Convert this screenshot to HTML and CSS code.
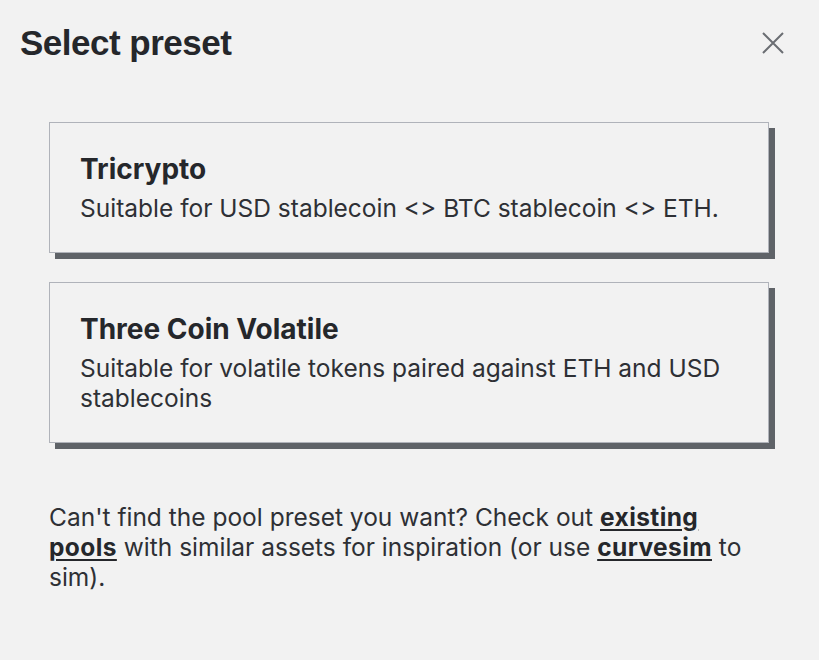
FILE: index.html
```html
<!DOCTYPE html>
<html lang="en">
<head>
<meta charset="utf-8">
<link rel="stylesheet" href="styles.css">
</head>
<body>
<div class="modal">
  <header class="modal-header">
    <h1 class="modal-title">Select preset</h1>
    <button class="close-btn" aria-label="Close">
      <svg width="24" height="24" viewBox="0 0 24 24"><path d="M2 2L22 22M22 2L2 22" stroke="#6b6e73" stroke-width="2" fill="none"/></svg>
    </button>
  </header>
  <div class="modal-body">
    <div class="preset-list">
      <div class="preset-card">
        <h2 class="preset-title">Tricrypto</h2>
        <p class="preset-desc">Suitable for USD stablecoin &lt;&gt; BTC stablecoin &lt;&gt; ETH.</p>
      </div>
      <div class="preset-card">
        <h2 class="preset-title">Three Coin Volatile</h2>
        <p class="preset-desc">Suitable for volatile tokens paired against ETH and USD stablecoins</p>
      </div>
    </div>
    <p class="footer-note">Can't find the pool preset you want? Check out <a href="#">existing pools</a> with similar assets for inspiration (or use <a href="#">curvesim</a> to sim).</p>
  </div>
</div>
</body>
</html>
```
FILE: styles.css
```css
* { box-sizing: border-box; }
html, body { margin: 0; padding: 0; }
body {
  background: #f2f2f2;
  color: #25272b;
  font-family: Inter, "Noto Sans", sans-serif;
  width: 819px;
  height: 660px;
  overflow: hidden;
}
.modal-header {
  display: flex;
  align-items: flex-start;
  justify-content: space-between;
  padding: 22px 34px 0 20px;
  height: 88px;
}
.modal-title {
  margin: 0;
  font-family: "Liberation Sans", Arial, sans-serif;
  font-weight: 700;
  font-size: 35px;
  line-height: 42px;
  letter-spacing: -0.5px;
  color: #25272b;
}
.close-btn {
  background: none;
  border: 0;
  padding: 0;
  margin-top: 9px;
  width: 24px;
  height: 24px;
  cursor: pointer;
}
.close-btn svg { display: block; }
.modal-body {
  padding: 34px 50px 0 49px;
}
.preset-list {
  display: flex;
  flex-direction: column;
  gap: 29px;
}
.preset-card {
  background: #f2f2f2;
  border: 1px solid #b0b3ba;
  box-shadow: 6px 6px 0 #5f6368;
  padding: 28px 30px 29px 30px;
}
.preset-title {
  margin: 0 0 6px;
  font-size: 28px;
  font-weight: 700;
  line-height: 36px;
  color: #25272b;
}
.preset-desc {
  margin: 0;
  font-size: 24.5px;
  line-height: 30px;
  color: #2e3035;
}
.footer-note {
  margin: 59px 8px 0 0;
  font-size: 24.5px;
  line-height: 30px;
  color: #2e3035;
}
.footer-note a {
  color: #25272b;
  font-weight: 700;
  letter-spacing: 0.4px;
  text-decoration: underline;
  text-underline-offset: 3px;
  text-decoration-thickness: 2px;
}
```
